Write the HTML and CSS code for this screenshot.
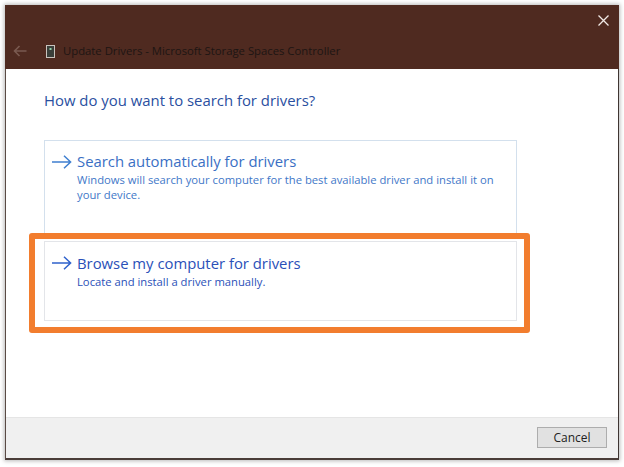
FILE: index.html
```html
<!DOCTYPE html>
<html lang="en">
<head>
<meta charset="utf-8">
<title>Update Drivers</title>
<link rel="stylesheet" href="styles.css">
</head>
<body>
<div class="window">
  <header class="titlebar">
    <div class="close-row">
      <svg class="close" width="11" height="11" viewBox="0 0 11 11"><path d="M.5.5l10 10M10.5.5l-10 10" stroke="#f1e9e6" stroke-width="1.3" fill="none"/></svg>
    </div>
    <div class="title-row">
      <svg class="back" width="14" height="12" viewBox="0 0 14 12"><path d="M13.5 6H1.5M6.5 1l-5 5 5 5" stroke="#7a5a50" stroke-width="1.6" fill="none"/></svg>
      <svg class="device" width="9" height="13" viewBox="0 0 9 13"><rect x=".5" y=".5" width="8" height="12" fill="#3a3f3a" stroke="#c9c3bd"/><rect x="3.5" y="3" width="2" height="2" fill="#8fd0a8"/></svg>
      <span class="title">Update Drivers - Microsoft Storage Spaces Controller</span>
    </div>
  </header>
  <main class="content">
    <h1 class="heading">How do you want to search for drivers?</h1>
    <section class="option first">
      <svg class="arrow" width="20" height="14" viewBox="0 0 20 14"><path d="M0 7h18.5M12 .8L18.6 7 12 13.2" stroke="#3f7fd0" stroke-width="1.5" fill="none"/></svg>
      <div class="option-text">
        <div class="option-title">Search automatically for drivers</div>
        <div class="option-desc">Windows will search your computer for the best available driver and install it on your device.</div>
      </div>
    </section>
    <section class="option second">
      <svg class="arrow" width="20" height="14" viewBox="0 0 20 14"><path d="M0 7h18.5M12 .8L18.6 7 12 13.2" stroke="#2f62cc" stroke-width="1.5" fill="none"/></svg>
      <div class="option-text">
        <div class="option-title dark">Browse my computer for drivers</div>
        <div class="option-desc dark">Locate and install a driver manually.</div>
      </div>
      <div class="highlight"></div>
    </section>
  </main>
  <footer class="footer">
    <button class="cancel" type="button">Cancel</button>
  </footer>
</div>
</body>
</html>
```
FILE: styles.css
```css
html, body {
  margin: 0;
  height: 100%;
  background: #fff;
}
body {
  padding: 5px 5px 7px 5px;
  box-sizing: border-box;
  width: 624px;
  height: 467px;
  overflow: hidden;
  font-family: "Open Sans", "Noto Sans", sans-serif;
}
.window {
  width: 614px;
  height: 455px;
  box-sizing: border-box;
  display: flex;
  flex-direction: column;
  background: #fff;
  border-left: 1px solid #5a4a44;
  border-right: 1px solid #3f3532;
  border-bottom: 2px solid #4a3d39;
  box-shadow: 0 0 4px 1px #b9b9b9;
}
.titlebar {
  height: 64px;
  margin: 0 -1px;
  flex: none;
  background: #4f2a20;
  display: flex;
  flex-direction: column;
}
.close-row {
  display: flex;
  justify-content: flex-end;
  padding: 10px 10px 0 0;
  height: 11px;
}
.close { display: block; }
.title-row {
  display: flex;
  align-items: center;
  padding: 17px 0 0 8px;
  height: 16px;
}
.back { display: block; margin-right: 19px; }
.device { display: block; margin-right: 8px; }
.title {
  font-size: 11.3px;
  line-height: 16px;
  color: #1d1513;
  white-space: nowrap;
}
.content {
  flex: 1;
  padding: 0 100px 0 38px;
}
.heading {
  margin: 0;
  padding-top: 21px;
  height: 50px;
  font-size: 14.9px;
  line-height: 20px;
  font-weight: 400;
  color: #2a4f9f;
}
.option {
  position: relative;
  box-sizing: border-box;
  width: 473px;
  display: flex;
  padding: 10px 16px 0 7px;
  gap: 5px;
  border: 1px solid #d3e0ed;
}
.first { height: 93px; border-bottom: 0; }
.second { height: 80px; margin-top: 8px; padding-top: 11px; border-color: #e3e5e9; }
.arrow { flex: none; margin-top: 4px; }
.second .arrow { margin-top: 3px; }
.option-title {
  font-size: 14.85px;
  line-height: 21px;
  color: #3a6fc4;
  white-space: nowrap;
}
.option-desc {
  font-size: 11.25px;
  line-height: 15px;
  color: #3f78c8;
}
.dark { color: #2a50b8; }
.highlight {
  position: absolute;
  left: -16px;
  top: -9px;
  width: 501px;
  height: 100px;
  box-sizing: border-box;
  border: 6px solid #f27d2e;
  border-radius: 3px;
}
.footer {
  height: 41px;
  flex: none;
  background: #f0f0f0;
  border-top: 1px solid #e5e5e5;
  display: flex;
  justify-content: flex-end;
  align-items: flex-start;
  box-sizing: border-box;
  padding: 9px 11px 0 0;
}
.cancel {
  width: 70px;
  height: 21px;
  padding: 0;
  background: #e1e1e1;
  border: 1px solid #adadad;
  font: 12px/19px "Open Sans", "Noto Sans", sans-serif;
  color: #222;
}
```
